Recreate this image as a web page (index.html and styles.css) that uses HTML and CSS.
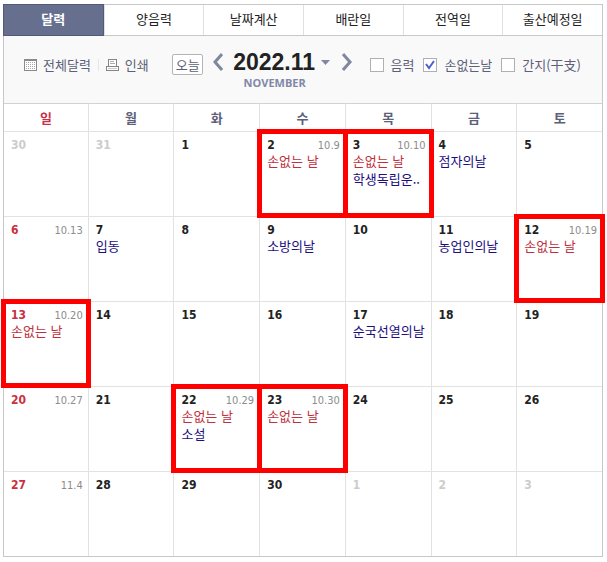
FILE: index.html
```html
<!DOCTYPE html>
<html lang="ko">
<head>
<meta charset="utf-8">
<meta name="viewport" content="width=device-width, initial-scale=1">
<title>달력 2022.11</title>
<link rel="stylesheet" href="styles.css">
</head>
<body>
<main class="calendar">
  <nav class="tabs">
    <a class="tab tab-active" href="#" aria-current="page">달력</a>
    <a class="tab" href="#">양음력</a>
    <a class="tab" href="#">날짜계산</a>
    <a class="tab" href="#">배란일</a>
    <a class="tab" href="#">전역일</a>
    <a class="tab" href="#">출산예정일</a>
  </nav>

  <div class="toolbar">
    <div class="tools">
      <a class="tool" href="#">
        <svg width="13" height="13" viewBox="0 0 13 13" shape-rendering="crispEdges" aria-hidden="true">
          <path d="M0.5 1.5h12v10h-12z" fill="#fff" stroke="#8a8a8a"/>
          <path d="M0 0h13v2H0z" fill="#8a8a8a"/>
          <path d="M2 3.500h9M2 5.500h9M2 7.500h9M2 9.500h9" stroke="#aaa" stroke-dasharray="1 1"/>
        </svg>
        전체달력</a>
      <a class="tool tool-print" href="#">
        <svg width="13" height="12" viewBox="0 0 13 12" shape-rendering="crispEdges" aria-hidden="true">
          <path d="M2.5 7V0.5h8V7" fill="#fff" stroke="#858585"/>
          <path d="M4 2.5h4M4 4.5h5" stroke="#aaa"/>
          <path d="M2.5 7.5h-2v4h12v-4h-2z" fill="#fff" stroke="#858585"/>
          <path d="M2 9.5h9" stroke="#ccc"/>
        </svg>
        인쇄</a>
    </div>

    <div class="month">
      <button class="today" type="button">오늘</button>
      <button class="arrow" type="button" aria-label="이전 달">
        <svg width="10" height="18" viewBox="0 0 10 18" aria-hidden="true"><path d="M9 1L2 9l7 8" fill="none" stroke="#8088a0" stroke-width="3"/></svg>
      </button>
      <div class="heading">
        <button class="picker" type="button">2022.11
          <svg width="9" height="5" viewBox="0 0 9 5" aria-hidden="true"><path d="M0 0h9L4.500 5z" fill="#8088a0"/></svg>
        </button>
        <span class="month-name">NOVEMBER</span>
      </div>
      <button class="arrow" type="button" aria-label="다음 달">
        <svg width="10" height="18" viewBox="0 0 10 18" aria-hidden="true"><path d="M1 1l7 8-7 8" fill="none" stroke="#8088a0" stroke-width="3"/></svg>
      </button>
    </div>

    <div class="options">
      <label class="option"><input type="checkbox">음력</label>
      <label class="option"><input type="checkbox" checked>손없는날</label>
      <label class="option"><input type="checkbox">간지(干支)</label>
    </div>
  </div>

  <table class="days">
    <thead>
      <tr><th class="sun" scope="col">일</th><th scope="col">월</th><th scope="col">화</th><th scope="col">수</th><th scope="col">목</th><th scope="col">금</th><th scope="col">토</th></tr>
    </thead>
    <tbody>
      <tr>
        <td class="other"><div class="date"><b>30</b></div></td>
        <td class="other"><div class="date"><b>31</b></div></td>
        <td><div class="date"><b>1</b></div></td>
        <td class="marked"><div class="date"><b>2</b><span>10.9</span></div><p class="lucky">손없는 날</p></td>
        <td class="marked"><div class="date"><b>3</b><span>10.10</span></div><p class="lucky">손없는 날</p><p>학생독립운..</p></td>
        <td><div class="date"><b>4</b></div><p>점자의날</p></td>
        <td><div class="date"><b>5</b></div></td>
      </tr>
      <tr>
        <td class="sun"><div class="date"><b>6</b><span>10.13</span></div></td>
        <td><div class="date"><b>7</b></div><p>입동</p></td>
        <td><div class="date"><b>8</b></div></td>
        <td><div class="date"><b>9</b></div><p>소방의날</p></td>
        <td><div class="date"><b>10</b></div></td>
        <td><div class="date"><b>11</b></div><p>농업인의날</p></td>
        <td class="marked"><div class="date"><b>12</b><span>10.19</span></div><p class="lucky">손없는 날</p></td>
      </tr>
      <tr>
        <td class="sun marked"><div class="date"><b>13</b><span>10.20</span></div><p class="lucky">손없는 날</p></td>
        <td><div class="date"><b>14</b></div></td>
        <td><div class="date"><b>15</b></div></td>
        <td><div class="date"><b>16</b></div></td>
        <td><div class="date"><b>17</b></div><p>순국선열의날</p></td>
        <td><div class="date"><b>18</b></div></td>
        <td><div class="date"><b>19</b></div></td>
      </tr>
      <tr>
        <td class="sun"><div class="date"><b>20</b><span>10.27</span></div></td>
        <td><div class="date"><b>21</b></div></td>
        <td class="marked"><div class="date"><b>22</b><span>10.29</span></div><p class="lucky">손없는 날</p><p>소설</p></td>
        <td class="marked"><div class="date"><b>23</b><span>10.30</span></div><p class="lucky">손없는 날</p></td>
        <td><div class="date"><b>24</b></div></td>
        <td><div class="date"><b>25</b></div></td>
        <td><div class="date"><b>26</b></div></td>
      </tr>
      <tr>
        <td class="sun"><div class="date"><b>27</b><span>11.4</span></div></td>
        <td><div class="date"><b>28</b></div></td>
        <td><div class="date"><b>29</b></div></td>
        <td><div class="date"><b>30</b></div></td>
        <td class="other"><div class="date"><b>1</b></div></td>
        <td class="other"><div class="date"><b>2</b></div></td>
        <td class="other"><div class="date"><b>3</b></div></td>
      </tr>
    </tbody>
  </table>
</main>
</body>
</html>
```
FILE: styles.css
```css
* {
  box-sizing: border-box;
}

body {
  margin: 0;
  padding: 4px 4px 5px 3px;
  background: #fff;
  color: #222;
  font: 13px/18px "Noto Sans CJK KR", sans-serif;
}

a {
  color: inherit;
  text-decoration: none;
}

button {
  margin: 0;
  padding: 0;
  border: 0;
  background: none;
  color: inherit;
  font: inherit;
}

svg {
  display: block;
  flex: none;
}

.calendar {
  border: 1px solid #c8c8c8;
}

/* Tabs */
.tabs {
  display: grid;
  grid-template-columns: repeat(6, 1fr);
  border-bottom: 1px solid #c8c8c8;
}

.tab {
  height: 30px;
  border-left: 1px solid #e0e0e0;
  line-height: 28px;
  text-align: center;
}

.tab-active {
  margin: -1px 0 -1px -1px;
  height: 32px;
  border: 1px solid #515a79;
  background: #666f8e;
  color: #fff;
  font-weight: 700;
}

/* Toolbar */
.toolbar {
  display: flex;
  justify-content: space-between;
  align-items: flex-start;
  padding: 14px 21px 12px 20px;
  background: #f9f9f9;
  color: #5c6078;
  white-space: nowrap;
}

.tools,
.options {
  display: flex;
  padding-top: 3px;
}

.tool,
.option {
  display: flex;
  align-items: center;
  height: 24px;
  gap: 6px;
}

.tool-print {
  margin-left: 7px;
  padding-left: 8px;
  background: linear-gradient(#e6e6e6, #e6e6e6) 0 center / 1px 12px no-repeat;
}

.month {
  display: flex;
  align-items: flex-start;
  gap: 10px;
  margin-left: 6px;
}

.today {
  width: 31px;
  height: 21px;
  margin-top: 4px;
  border: 1px solid #b4b4b4;
  border-radius: 2px;
  background: #fff;
  line-height: 19px;
}

.arrow {
  display: flex;
  align-items: center;
  height: 24px;
}

.heading {
  display: flex;
  flex-direction: column;
  padding-right: 2px;
}

.picker {
  display: flex;
  align-items: center;
  gap: 6px;
  height: 25px;
  color: #222;
  font: 700 23px/25px "Liberation Sans", sans-serif;
}

.month-name {
  padding-right: 14px;
  color: #8088a8;
  font: 700 11px/16px "Open Sans", sans-serif;
  text-align: center;
}

.options {
  gap: 9px;
}

.option {
  gap: 7px;
}

.option input {
  appearance: none;
  width: 14px;
  height: 14px;
  margin: 0;
  border: 1px solid #b0b0b0;
  background: #fff;
}

.option input:checked {
  background: #fff url("data:image/svg+xml,%3Csvg xmlns='http://www.w3.org/2000/svg' viewBox='0 0 12 12'%3E%3Cpath d='M2 5l3 4 5-7' fill='none' stroke='%234a62d0' stroke-width='2'/%3E%3C/svg%3E") center / 12px 12px;
}

/* Month grid */
.days {
  width: 100%;
  table-layout: fixed;
  border-collapse: separate;
  border-spacing: 0;
}

.days th,
.days td {
  border-top: 1px solid #e2e2e2;
  border-left: 1px solid #e2e2e2;
}

.days th:first-child,
.days td:first-child {
  width: 14%;
  border-left: 0;
}

.days th {
  height: 28px;
  padding: 0;
  border-top-color: #d2d2d2;
  color: #5c6078;
  line-height: 24px;
  font-weight: 700;
}

.days th.sun {
  color: #c9304b;
}

.days td {
  position: relative;
  height: 85px;
  padding: 4px 5px 0 7px;
  vertical-align: top;
}

.date {
  display: flex;
  justify-content: space-between;
  align-items: baseline;
  height: 16px;
  font: 11px/18px "DejaVu Sans Condensed", "Noto Sans", sans-serif;
  color: #8c8c8c;
}

.date b {
  color: #222;
  font-size: 12px;
}

.sun .date b {
  color: #c9303f;
}

.other .date b {
  color: #ccc;
}

.days p {
  margin: 0;
  color: #1c0f80;
  white-space: nowrap;
}

.days .lucky {
  color: #c0303c;
}

/* Red frame laid over the highlighted days */
.marked::after {
  content: "";
  position: absolute;
  z-index: 1;
  inset: -3px -3px -2px;
  border: 5px solid #f00;
  pointer-events: none;
}
```
